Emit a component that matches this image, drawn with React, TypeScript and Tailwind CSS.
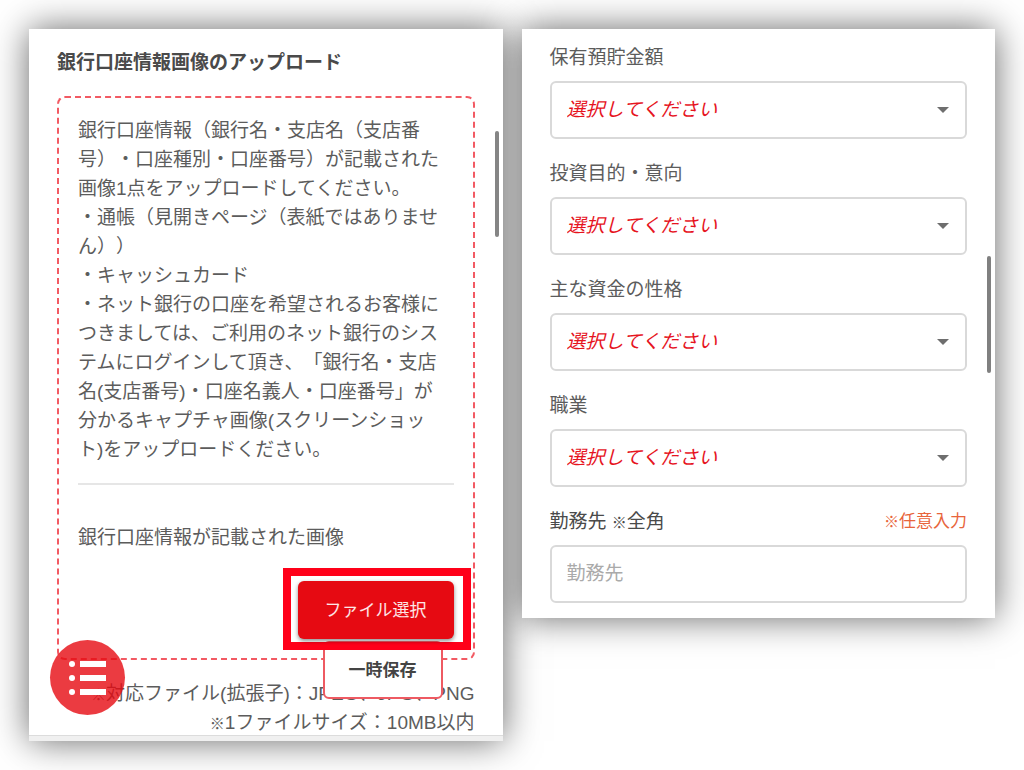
import { useState, ReactNode } from "react";

interface SelectFieldProps {
    id: string;
    label: string;
    options: string[];
}

const GUIDE_LINES = [
    "銀行口座情報（銀行名・支店名（支店番",
    "号）・口座種別・口座番号）が記載された",
    "画像1点をアップロードしてください。",
    "・通帳（見開きページ（表紙ではありませ",
    "ん））",
    "・キャッシュカード",
    "・ネット銀行の口座を希望されるお客様に",
    "つきましては、ご利用のネット銀行のシス",
    "テムにログインして頂き、「銀行名・支店",
    "名(支店番号)・口座名義人・口座番号」が",
    "分かるキャプチャ画像(スクリーンショッ",
    "ト)をアップロードください。",
];

const SELECT_FIELDS: SelectFieldProps[] = [
    { id: "savings", label: "保有預貯金額", options: ["100万円未満", "500万円未満", "500万円以上"] },
    { id: "purpose", label: "投資目的・意向", options: ["長期投資", "短期売買"] },
    { id: "funds", label: "主な資金の性格", options: ["余裕資金", "借入金"] },
    { id: "job", label: "職業", options: ["会社員", "自営業", "その他"] },
];

// Small reference mark in front of notes
const Kome = () => <span className="text-[15px] leading-none font-medium">※</span>;

const Screen = ({ children, className }: { children: ReactNode; className: string }) => (
    <section
        className={`
            relative flex-1 min-w-0 bg-white
            before:absolute before:inset-0 before:-z-10
            before:shadow-[0_0_34px_rgba(0,0,0,0.6)]
            ${className}
        `}
    >
        {children}
    </section>
);

const SelectField = ({ id, label, options }: SelectFieldProps) => {
    const [value, setValue] = useState("");

    return (
        <div>
            <label htmlFor={id} className="block">{label}</label>
            <div className="relative mt-[9px]">
                <select
                    id={id}
                    value={value}
                    onChange={(e) => setValue(e.target.value)}
                    className="
                        block w-full h-[58px] pl-[15px] pr-12 pb-[2px]
                        appearance-none bg-white
                        border-2 border-[#d9d9d9] rounded-md
                        italic text-[#e6141e]
                    "
                >
                    <option value="">選択してください</option>
                    {options.map((o) => (
                        <option key={o} value={o}>{o}</option>
                    ))}
                </select>
                <svg
                    viewBox="0 0 12 6"
                    className="absolute right-[18px] top-[26px] w-3 h-[6px] pointer-events-none"
                >
                    <path d="M0 0h12L6 6z" fill="#6e6e6e" />
                </svg>
            </div>
        </div>
    );
};

const UploadScreen = () => (
    <Screen className="px-7 pt-[19px] pb-1">
        <h1 className="font-bold text-[#4a4a4a]">銀行口座情報画像のアップロード</h1>

        {/* Upload box */}
        <div className="mt-[19px] px-[19px] pt-[18px] pb-[19px] border-2 border-dashed border-[#f25a63] rounded-lg">
            <p className="whitespace-nowrap">
                {GUIDE_LINES.map((line) => (
                    <span key={line} className="block">{line}</span>
                ))}
            </p>
            <hr className="mt-[19px] border-t-2 border-[#e6e6e6]" />
            <p className="mt-[38px]">銀行口座情報が記載された画像</p>

            <div className="relative w-[156px] mt-[29px] ml-auto">
                <button
                    type="button"
                    className="
                        relative z-20 block w-full h-[58px]
                        text-[17px] text-white/90 bg-[#e60a12]
                        rounded-md shadow-[0_2px_4px_rgba(0,0,0,0.45)]
                    "
                >
                    ファイル選択
                </button>
                <div className="absolute z-10 -top-[13px] -bottom-[11px] -left-[15px] -right-[17px] border-8 border-[#ff0019]" />
                <button
                    type="button"
                    className="
                        absolute top-[60px] left-[25px] w-[120px] h-[58px]
                        text-[17px] font-bold text-[#444] bg-white
                        border-2 border-[#ee5a62] rounded-md
                    "
                >
                    一時保存
                </button>
            </div>
        </div>

        {/* Notes */}
        <div className="mt-[19px] text-right">
            <p><Kome />対応ファイル(拡張子)：JPEG、JPG、PNG</p>
            <p><Kome />1ファイルサイズ：10MB以内</p>
        </div>

        {/* Floating menu */}
        <button
            type="button"
            aria-label="メニュー"
            className="
                absolute bottom-[26px] left-[21px]
                flex items-center justify-center
                w-[75px] h-[75px] rounded-full bg-[#e60a11]/80
            "
        >
            <svg viewBox="0 0 38 36" className="w-[38px] h-9" fill="#fff">
                <circle cx="3" cy="4" r="3" />
                <circle cx="3" cy="18" r="3" />
                <circle cx="3" cy="32" r="3" />
                <path d="M11 1h26v6H11zM11 15h26v6H11zM11 29h26v6H11z" />
            </svg>
        </button>

        <div className="absolute right-1 top-[102px] w-1 h-[106px] rounded-full bg-[#858585]" />
        <div className="absolute inset-x-0 bottom-0 h-[6px] bg-[#f0f0f0] border-t border-[#dcdcdc]" />
    </Screen>
);

const ProfileScreen = () => {
    const [company, setCompany] = useState("");

    return (
        <Screen className="flex flex-col gap-5 px-7 pt-[14px] pb-[15px]">
            {SELECT_FIELDS.map((f) => (
                <SelectField key={f.id} {...f} />
            ))}

            <div>
                <div className="flex items-center justify-between h-[29px]">
                    <label htmlFor="company" className="text-[#4a4a4a]">勤務先 <Kome />全角</label>
                    <span className="text-[17px] text-[#e8653c]"><Kome />任意入力</span>
                </div>
                <input
                    id="company"
                    type="text"
                    value={company}
                    onChange={(e) => setCompany(e.target.value)}
                    placeholder="勤務先"
                    className="
                        block w-full h-[58px] mt-[9px] px-[15px]
                        border-2 border-[#d9d9d9] rounded-md
                        placeholder:text-[#aaa]
                    "
                />
            </div>

            <div className="absolute right-1 top-[227px] w-1 h-[117px] rounded-full bg-[#808080]" />
        </Screen>
    );
};

export default function App() {
    return (
        <main
            lang="ja"
            className="
                isolate flex items-start gap-[19px] p-[29px]
                bg-white text-[19px] leading-[29px] text-[#5c5c5c]
                font-['Liberation_Sans','Noto_Sans_CJK_JP',sans-serif]
                [text-spacing-trim:space-all]
            "
        >
            <UploadScreen />
            <ProfileScreen />
        </main>
    );
}
